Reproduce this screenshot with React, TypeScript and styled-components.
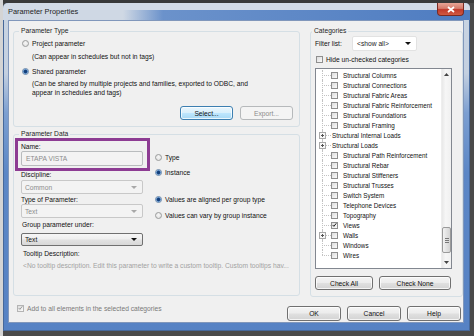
import React from "react";
import styled, { createGlobalStyle, css } from "styled-components";

const GlobalStyle = createGlobalStyle`
  html, body { margin: 0; padding: 0; background: #444444; }
  body {
    font-family: "Liberation Sans", Arial, sans-serif;
    font-size: 6.7px;
    color: #111111;
  }
  * { box-sizing: border-box; }
`;

const Backdrop = styled.div`
  width: 474px;
  height: 336px;
  overflow: hidden;
  padding: 3px 0 0 3px;
  background:
    linear-gradient(to right, #d4d4d4 0 3px, transparent 3px),
    linear-gradient(to bottom, #3a3a3a 0 3px, #4a4a4a 3px);
`;

const Window = styled.div`
  width: 467px;
  height: 328px;
  display: flex;
  flex-direction: column;
  padding: 0 6px 8px 5px;
  border-radius: 5px 5px 0 0;
  background: linear-gradient(to bottom, #c9d4e2 0px, #c4d0e0 70px, #7c9fd1 110px, #5c87c6 170px, #5682c4 100%);
  box-shadow: inset 0 0 0 1px #46689a;
`;

const TitleBar = styled.div`
  height: 17px;
  flex: none;
  display: flex;
  align-items: flex-start;
  margin: 0 -6px 0 -5px;
  padding: 0 6px 0 5px;
  border-radius: 5px 5px 0 0;
  background:
    linear-gradient(to bottom, #d3dbe6 0 7px, transparent 7px),
    linear-gradient(to right, #cfd8e4 0 120px, #6b92cb 160px, #4e7cc1 100%);
`;

const Title = styled.span`
  font-size: 7.4px;
  line-height: 17px;
  color: #1e1e1e;
`;

const CloseButton = styled.div`
  margin-left: auto;
  width: 27px;
  height: 13px;
  display: flex;
  align-items: center;
  justify-content: center;
  border: 1px solid #7a2a22;
  border-top: none;
  border-radius: 0 0 4px 4px;
  background: linear-gradient(to bottom, #e8a596 0%, #d57b6b 45%, #c0392b 55%, #cf5a43 100%);
`;

const Client = styled.div`
  flex: 1;
  display: flex;
  flex-direction: column;
  background: #f0f0f0;
  border: 1px solid #8197bb;
  padding: 10px 0 0 4px;
`;

const TopRow = styled.div`
  display: flex;
  gap: 10px;
  height: 266px;
`;

const LeftCol = styled.div`
  width: 287px;
  display: flex;
  flex-direction: column;
  gap: 7px;
`;

const Group = styled.div<{ $w?: number; $h: number }>`
  position: relative;
  width: ${(p) => (p.$w ? `${p.$w}px` : "100%")};
  height: ${(p) => p.$h}px;
  border: 1px solid #d5dfe5;
  border-radius: 3px;
  display: flex;
  flex-direction: column;
`;

const Legend = styled.span<{ $left: number }>`
  position: absolute;
  top: -6px;
  left: ${(p) => p.$left}px;
  padding: 0 2px;
  line-height: 9px;
  background: #f0f0f0;
  color: #1e1e1e;
`;

const TypeBody = styled.div`
  padding: 6px 6px 0 8px;
  display: flex;
  flex-direction: column;
`;

const RadioRow = styled.label<{ $mt?: number }>`
  display: flex;
  align-items: center;
  gap: 3px;
  height: 10px;
  margin-top: ${(p) => p.$mt ?? 0}px;
  white-space: nowrap;
`;

const Radio = styled.span<{ $checked?: boolean }>`
  width: 7px;
  height: 7px;
  flex: none;
  border-radius: 50%;
  border: 1px solid #9a9b9b;
  background: radial-gradient(circle at 50% 40%, #f6f6f6, #dedede);
  ${(p) =>
    p.$checked &&
    css`
      border-color: #6a88aa;
      background: radial-gradient(circle, #143f7a 0 1.3px, #4f86c6 2px, #dde8f3 2.6px);
    `}
`;

const Desc = styled.div<{ $mt: number }>`
  margin-top: ${(p) => p.$mt}px;
  padding-left: 10px;
  line-height: 9px;
  white-space: nowrap;
`;

const ButtonRow = styled.div<{ $mt: number; $gap: number; $justify?: string }>`
  margin-top: ${(p) => p.$mt}px;
  display: flex;
  justify-content: ${(p) => p.$justify ?? "flex-start"};
  gap: ${(p) => p.$gap}px;
`;

type BtnVariant = "normal" | "focus" | "disabled";

const Button = styled.button<{ $w: number; $h?: number; $variant?: BtnVariant }>`
  width: ${(p) => p.$w}px;
  height: ${(p) => p.$h ?? 14}px;
  padding: 0;
  margin: 0;
  font: inherit;
  color: #111111;
  border: 1px solid #707070;
  border-radius: 3px;
  background: linear-gradient(to bottom, #f4f4f4 0%, #ececec 48%, #e0e0e0 52%, #d3d3d3 100%);
  box-shadow: inset 0 0 0 1px rgba(255, 255, 255, 0.75);
  ${(p) =>
    p.$variant === "focus" &&
    css`
      border-color: #3c7fb1;
      background: linear-gradient(to bottom, #eaf6fd 0%, #d9f0fc 48%, #bee6fd 52%, #a7d9f5 100%);
    `}
  ${(p) =>
    p.$variant === "disabled" &&
    css`
      border-color: #b6b9bb;
      background: #f4f4f4;
      color: #8b8b8b;
      box-shadow: none;
    `}
`;

const DataBody = styled.div`
  padding: 7px 0 0 7px;
  display: flex;
  flex-direction: column;
`;

const FieldsRow = styled.div`
  display: flex;
`;

const FieldsCol = styled.div`
  width: 122px;
  display: flex;
  flex-direction: column;
`;

const FieldLabel = styled.div<{ $mt?: number; $pl?: number }>`
  margin-top: ${(p) => p.$mt ?? 0}px;
  padding-left: ${(p) => p.$pl ?? 0}px;
  line-height: 9px;
  height: 9px;
  white-space: nowrap;
`;

const TextInput = styled.div`
  height: 15px;
  display: flex;
  align-items: center;
  padding-left: 4px;
  border: 1px solid #b9bcbe;
  border-radius: 2px;
  background: #f3f3f3;
  color: #8c8c8c;
`;

type ComboVariant = "disabled" | "button" | "white";

const Combo = styled.div<{ $w?: number; $h: number; $mt?: number; $variant: ComboVariant }>`
  width: ${(p) => (p.$w ? `${p.$w}px` : "100%")};
  height: ${(p) => p.$h}px;
  margin-top: ${(p) => p.$mt ?? 0}px;
  display: flex;
  align-items: center;
  justify-content: space-between;
  padding: 0 5px 0 3px;
  border-radius: 2px;
  ${(p) =>
    p.$variant === "disabled" &&
    css`
      border: 1px solid #c8c8c8;
      background: #f3f3f3;
      color: #8c8c8c;
    `}
  ${(p) =>
    p.$variant === "button" &&
    css`
      border: 1px solid #707070;
      background: linear-gradient(to bottom, #f6f6f6 0%, #eeeeee 48%, #e2e2e2 52%, #d8d8d8 100%);
      color: #111;
    `}
  ${(p) =>
    p.$variant === "white" &&
    css`
      border: 1px solid #e2e2e2;
      background: #ffffff;
      color: #222;
      padding-left: 4px;
    `}
`;

const Arrow = styled.span<{ $color: string }>`
  width: 0;
  height: 0;
  border-left: 3px solid transparent;
  border-right: 3px solid transparent;
  border-top: 3px solid ${(p) => p.$color};
`;

const RadioCol = styled.div`
  margin-left: 12px;
  padding-top: 10px;
  display: flex;
  flex-direction: column;
`;

const TooltipText = styled.div`
  margin-top: 3px;
  padding-left: 2px;
  line-height: 9px;
  color: #a2a2a2;
  white-space: nowrap;
`;

const Highlight = styled.div`
  position: absolute;
  left: 1px;
  top: 3px;
  width: 135px;
  height: 33px;
  border: 3px solid #8d3c93;
  pointer-events: none;
`;

const CatBody = styled.div`
  padding: 4px 0 0 4px;
  display: flex;
  flex-direction: column;
`;

const FilterRow = styled.div`
  display: flex;
  align-items: center;
  height: 15px;
`;

const FilterLabel = styled.span`
  width: 37px;
`;

const CheckRow = styled.label<{ $mt?: number; $pl?: number; $color?: string }>`
  display: flex;
  align-items: center;
  gap: 3px;
  height: 10px;
  margin-top: ${(p) => p.$mt ?? 0}px;
  padding-left: ${(p) => p.$pl ?? 0}px;
  color: ${(p) => p.$color ?? "inherit"};
  white-space: nowrap;
`;

const Box = styled.span<{ $faded?: boolean }>`
  width: 7px;
  height: 7px;
  flex: none;
  display: flex;
  align-items: center;
  justify-content: center;
  border: 1px solid ${(p) => (p.$faded ? "#b4b4b4" : "#8f8f8f")};
  background: linear-gradient(135deg, #dcdcdc, #fbfbfb);
`;

const ListBox = styled.div`
  margin-top: 4px;
  width: 137px;
  height: 201px;
  display: flex;
  border: 1px solid #828790;
  background: #ffffff;
`;

const TreeArea = styled.div`
  flex: 1;
  padding-top: 1px;
  display: flex;
  flex-direction: column;
  font-size: 6.3px;
`;

const TreeRow = styled.div`
  height: 10px;
  flex: none;
  display: flex;
  align-items: center;
  white-space: nowrap;
`;

const Gutter = styled.span<{ $last?: boolean }>`
  position: relative;
  width: 15px;
  height: 10px;
  flex: none;
  &::before {
    content: "";
    position: absolute;
    left: 6px;
    top: 0;
    height: ${(p) => (p.$last ? 5 : 10)}px;
    border-left: 1px dotted #c2c2c2;
  }
  &::after {
    content: "";
    position: absolute;
    left: 6px;
    top: 5px;
    width: 9px;
    border-top: 1px dotted #c2c2c2;
  }
`;

const Expander = styled.svg`
  position: absolute;
  left: 3px;
  top: 2px;
  z-index: 1;
`;

const TreeLabel = styled.span<{ $indent: number }>`
  margin-left: ${(p) => p.$indent}px;
  color: #111111;
`;

const ScrollBar = styled.div`
  width: 10px;
  flex: none;
  display: flex;
  flex-direction: column;
  background: linear-gradient(to right, #e8e8e8, #f6f6f6 40%, #f0f0f0);
  border-left: 1px solid #eeeeee;
`;

const ScrollArrow = styled.div`
  height: 11px;
  flex: none;
  display: flex;
  align-items: center;
  justify-content: center;
`;

const ScrollTrack = styled.div`
  flex: 1;
  display: flex;
  flex-direction: column;
  align-items: center;
`;

const Thumb = styled.div<{ $top: number; $h: number }>`
  margin-top: ${(p) => p.$top}px;
  width: 9px;
  height: ${(p) => p.$h}px;
  display: flex;
  align-items: center;
  justify-content: center;
  border: 1px solid #9a9a9a;
  border-radius: 2px;
  background: linear-gradient(to right, #f2f2f2, #e2e2e2 50%, #d4d4d4);
`;

const BottomRow = styled.div`
  margin-top: 6px;
  height: 18px;
  display: flex;
  align-items: flex-start;
  padding-left: 4px;
`;

const BottomButtons = styled.div`
  margin-left: auto;
  margin-right: 2px;
  margin-top: 3px;
  display: flex;
  gap: 6px;
`;

const Check = ({ color }: { color: string }) => (
  <svg width="6" height="6" viewBox="0 0 6 6">
    <polyline points="0.8,3 2.3,4.6 5.2,0.9" fill="none" stroke={color} strokeWidth="1.2" />
  </svg>
);

type TreeItem = {
  label: string;
  group?: boolean;
  checked?: boolean;
  expander?: boolean;
  last?: boolean;
};

const tree: TreeItem[] = [
  { label: "Structural Columns" },
  { label: "Structural Connections" },
  { label: "Structural Fabric Areas" },
  { label: "Structural Fabric Reinforcement" },
  { label: "Structural Foundations" },
  { label: "Structural Framing" },
  { label: "Structural Internal Loads", group: true, expander: true },
  { label: "Structural Loads", group: true, expander: true },
  { label: "Structural Path Reinforcement" },
  { label: "Structural Rebar" },
  { label: "Structural Stiffeners" },
  { label: "Structural Trusses" },
  { label: "Switch System" },
  { label: "Telephone Devices" },
  { label: "Topography" },
  { label: "Views", checked: true },
  { label: "Walls", expander: true },
  { label: "Windows" },
  { label: "Wires", last: true },
];

const PlusBox = () => (
  <Expander width="7" height="7" viewBox="0 0 7 7">
    <rect x="0.5" y="0.5" width="6" height="6" fill="#f8f8f8" stroke="#a8a8a8" />
    <line x1="2" y1="3.5" x2="5" y2="3.5" stroke="#555" strokeWidth="1" />
    <line x1="3.5" y1="2" x2="3.5" y2="5" stroke="#555" strokeWidth="1" />
  </Expander>
);

export default function App() {
  return (
    <>
      <GlobalStyle />
      <Backdrop>
        <Window>
          <TitleBar>
            <Title>Parameter Properties</Title>
            <CloseButton>
              <svg width="8" height="7" viewBox="0 0 8 7">
                <line x1="1" y1="1" x2="7" y2="6" stroke="#ffffff" strokeWidth="1.7" />
                <line x1="7" y1="1" x2="1" y2="6" stroke="#ffffff" strokeWidth="1.7" />
              </svg>
            </CloseButton>
          </TitleBar>
          <Client>
            <TopRow>
              <LeftCol>
                <Group $h={96}>
                  <Legend $left={5}>Parameter Type</Legend>
                  <TypeBody>
                    <RadioRow>
                      <Radio />
                      Project parameter
                    </RadioRow>
                    <Desc $mt={4}>(Can appear in schedules but not in tags)</Desc>
                    <RadioRow $mt={5}>
                      <Radio $checked />
                      Shared parameter
                    </RadioRow>
                    <Desc $mt={3}>
                      (Can be shared by multiple projects and families, exported to ODBC, and
                      <br />
                      appear in schedules and tags)
                    </Desc>
                    <ButtonRow $mt={9} $gap={7} $justify="flex-end">
                      <Button $w={53} $variant="focus">
                        Select...
                      </Button>
                      <Button $w={53} $variant="disabled">
                        Export...
                      </Button>
                    </ButtonRow>
                  </TypeBody>
                </Group>
                <Group $h={162}>
                  <Legend $left={5}>Parameter Data</Legend>
                  <Highlight />
                  <DataBody>
                    <FieldsRow>
                      <FieldsCol>
                        <FieldLabel>Name:</FieldLabel>
                        <TextInput>ETAPA VISTA</TextInput>
                        <FieldLabel $mt={4}>Discipline:</FieldLabel>
                        <Combo $h={14} $mt={1} $variant="disabled">
                          Common
                          <Arrow $color="#a8a8a8" />
                        </Combo>
                        <FieldLabel $mt={1}>Type of Parameter:</FieldLabel>
                        <Combo $h={14} $variant="disabled">
                          Text
                          <Arrow $color="#a8a8a8" />
                        </Combo>
                        <FieldLabel $mt={2} $pl={1}>
                          Group parameter under:
                        </FieldLabel>
                        <Combo $h={13} $mt={4} $variant="button">
                          Text
                          <Arrow $color="#111111" />
                        </Combo>
                      </FieldsCol>
                      <RadioCol>
                        <RadioRow>
                          <Radio />
                          Type
                        </RadioRow>
                        <RadioRow $mt={5}>
                          <Radio $checked />
                          Instance
                        </RadioRow>
                        <RadioRow $mt={17}>
                          <Radio $checked />
                          Values are aligned per group type
                        </RadioRow>
                        <RadioRow $mt={6}>
                          <Radio />
                          Values can vary by group instance
                        </RadioRow>
                      </RadioCol>
                    </FieldsRow>
                    <FieldLabel $mt={3} $pl={2}>
                      Tooltip Description:
                    </FieldLabel>
                    <TooltipText>
                      &lt;No tooltip description. Edit this parameter to write a custom tooltip. Custom tooltips hav...
                    </TooltipText>
                  </DataBody>
                </Group>
              </LeftCol>
              <Group $w={153} $h={266}>
                <Legend $left={1}>Categories</Legend>
                <CatBody>
                  <FilterRow>
                    <FilterLabel>Filter list:</FilterLabel>
                    <Combo $w={65} $h={15} $variant="white">
                      &lt;show all&gt;
                      <Arrow $color="#111111" />
                    </Combo>
                  </FilterRow>
                  <CheckRow $mt={3} $pl={1}>
                    <Box />
                    Hide un-checked categories
                  </CheckRow>
                  <ListBox>
                    <TreeArea>
                      {tree.map((item) => (
                        <TreeRow key={item.label}>
                          <Gutter $last={item.last}>{item.expander && <PlusBox />}</Gutter>
                          {!item.group && (
                            <Box>{item.checked && <Check color="#222" />}</Box>
                          )}
                          <TreeLabel $indent={item.group ? 1 : 5}>{item.label}</TreeLabel>
                        </TreeRow>
                      ))}
                    </TreeArea>
                    <ScrollBar>
                      <ScrollArrow>
                        <svg width="5" height="3" viewBox="0 0 5 3">
                          <polygon points="0,3 2.5,0 5,3" fill="#444" />
                        </svg>
                      </ScrollArrow>
                      <ScrollTrack>
                        <Thumb $top={147} $h={26}>
                          <svg width="4" height="5" viewBox="0 0 4 5">
                            <line x1="0" y1="0.5" x2="4" y2="0.5" stroke="#777" />
                            <line x1="0" y1="2.5" x2="4" y2="2.5" stroke="#777" />
                            <line x1="0" y1="4.5" x2="4" y2="4.5" stroke="#777" />
                          </svg>
                        </Thumb>
                      </ScrollTrack>
                      <ScrollArrow>
                        <svg width="5" height="3" viewBox="0 0 5 3">
                          <polygon points="0,0 2.5,3 5,0" fill="#444" />
                        </svg>
                      </ScrollArrow>
                    </ScrollBar>
                  </ListBox>
                  <ButtonRow $mt={7} $gap={6}>
                    <Button $w={58}>Check All</Button>
                    <Button $w={72}>Check None</Button>
                  </ButtonRow>
                </CatBody>
              </Group>
            </TopRow>
            <BottomRow>
              <CheckRow $color="#7a7a7a">
                <Box $faded>
                  <Check color="#9a9a9a" />
                </Box>
                Add to all elements in the selected categories
              </CheckRow>
              <BottomButtons>
                <Button $w={54} $h={15}>
                  OK
                </Button>
                <Button $w={54} $h={15}>
                  Cancel
                </Button>
                <Button $w={54} $h={15}>
                  Help
                </Button>
              </BottomButtons>
            </BottomRow>
          </Client>
        </Window>
      </Backdrop>
    </>
  );
}
